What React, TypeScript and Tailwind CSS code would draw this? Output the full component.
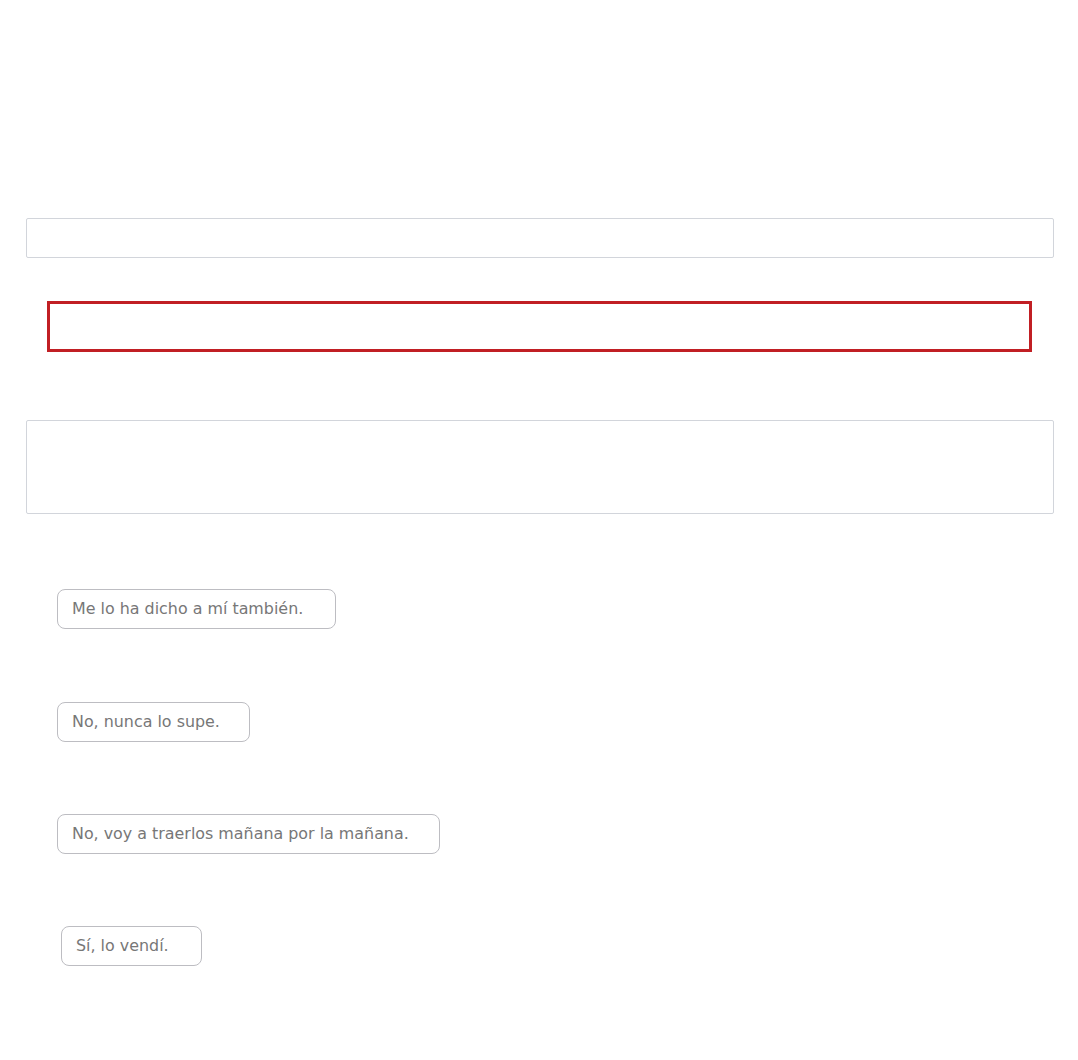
import React from 'react';

const answers = [
  { text: 'Me lo ha dicho a mí también.', width: 'w-[279px]', offset: 'ml-[57px] mt-0' },
  { text: 'No, nunca lo supe.', width: 'w-[193px]', offset: 'ml-[57px] mt-[73px]' },
  { text: 'No, voy a traerlos mañana por la mañana.', width: 'w-[383px]', offset: 'ml-[57px] mt-[72px]' },
  { text: 'Sí, lo vendí.', width: 'w-[141px]', offset: 'ml-[61px] mt-[72px]' },
];

export default function App() {
  return (
    <div className="min-h-[1060px] w-full bg-white font-['DejaVu_Sans',sans-serif] text-[#707070]">
      <div className="pt-[218px] pl-[26px] pr-[24px]">
        {/* Prompt box */}
        <div className="h-[40px] rounded-[2px] border border-[#d2d5db] bg-white" />

        {/* Answer slot */}
        <div className="mt-[43px] ml-[21px] mr-[22px] h-[51px] border-[3px] border-[#c11f24]" />

        {/* Text area */}
        <div className="mt-[68px] h-[94px] rounded-[2px] border border-[#d2d5db] bg-white" />
      </div>

      {/* Choices */}
      <div className="mt-[75px] flex flex-col">
        {answers.map((a) => (
          <div
            key={a.text}
            className={`${a.offset} ${a.width} h-[40px] flex items-center rounded-[8px] border border-[#bdbdc2] pl-[14px] text-[15.9px] text-[#777777] whitespace-nowrap`}
          >
            {a.text}
          </div>
        ))}
      </div>
    </div>
  );
}
